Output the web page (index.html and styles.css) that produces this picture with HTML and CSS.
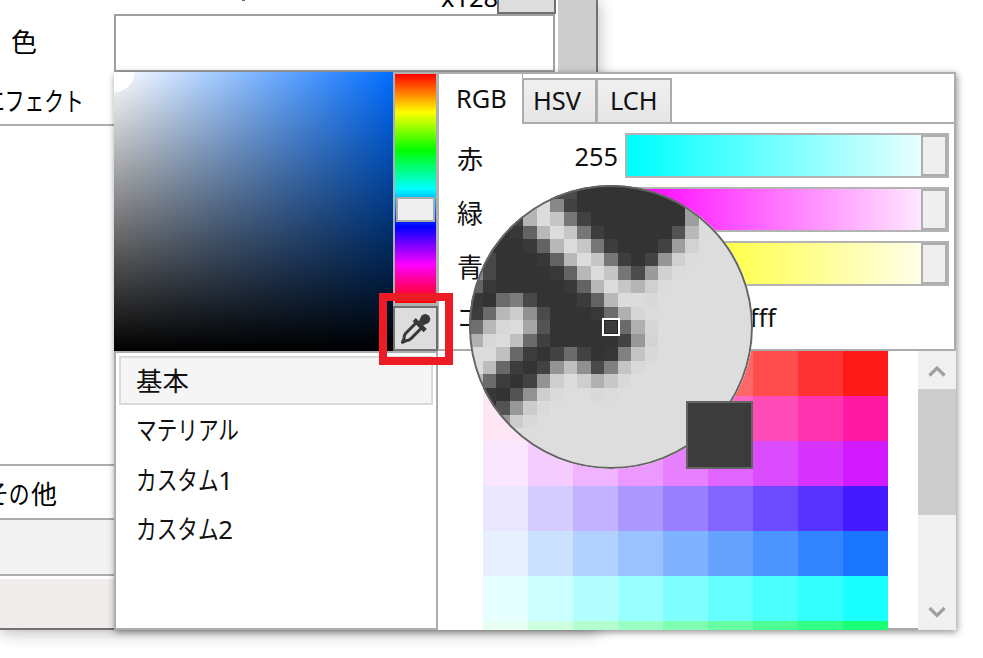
FILE: index.html
```html
<!DOCTYPE html>
<html lang="ja">
<head>
<meta charset="utf-8">
<title>カラーピッカー</title>
<link rel="stylesheet" href="styles.css">
</head>
<body>
<div class="desktop">
  <div class="window">
    <div class="props">
      <div class="top-row"><span class="speck"></span><span class="multiplier">x128</span><span class="top-button"></span></div>
      <div class="color-row"><span class="label">色</span><div class="color-box"></div></div>
      <div class="effect-row"><span class="kana">エフェクト</span></div>
      <div class="effect-list"></div>
      <div class="other-row"><span class="other"><span class="kana">その</span>他</span></div>
      <div class="other-panel"></div>
      <div class="status"></div>
    </div>
    <div class="window-scroll"></div>
  </div>

  <div class="picker">
    <div class="left">
      <div class="spectrum-row">
        <div class="spectrum"></div>
        <div class="hue-col">
          <div class="hue"><div class="hue-thumb"></div></div>
          <div class="dropper">
            <svg width="36" height="36" viewBox="0 0 36 36">
              <path d="M19 11 L8.5 21.5 Q7.2 23 7 26.5 L5.4 30.3 L9 28.8 Q12 28.6 14 26.6 L24.5 16" fill="none" stroke="#383838" stroke-width="3" stroke-linejoin="round"/>
              <path d="M15.6 9.2 L18.8 6 L29.8 17 L26.6 20.2 Z" fill="#383838"/>
              <path d="M21.8 9.4 L24.4 3.8 Q28 .2 31.8 3.4 Q35 7.2 31.4 11 L26 13.6 Z" fill="#383838"/>
            </svg>
          </div>
        </div>
      </div>
      <div class="palette-list">
        <div class="item selected">基本</div>
        <div class="item"><span class="kana">マテリアル</span></div>
        <div class="item"><span class="kana custom">カスタム</span><span>1</span></div>
        <div class="item"><span class="kana custom">カスタム</span><span>2</span></div>
      </div>
    </div>
    <div class="right">
      <div class="tabs"><div class="tab active">RGB</div><div class="tab">HSV</div><div class="tab">LCH</div><div class="tab-fill"></div></div>
      <div class="channels">
        <div class="channel"><span class="name">赤</span><span class="value">255</span><div class="bar red"><i></i></div></div>
        <div class="channel"><span class="name">緑</span><span class="value">255</span><div class="bar green"><i></i></div></div>
        <div class="channel"><span class="name">青</span><span class="value">255</span><div class="bar blue"><i></i></div></div>
        <div class="code"><span class="kana">コード</span><span class="hex">#ffffff</span></div>
      </div>
      <div class="swatch-area">
        <div class="swatches" id="swatches"></div>
        <div class="scroll">
          <svg width="38" height="38" viewBox="0 0 38 38"><path d="M11.5 24.5 L19 17 L26.5 24.5" fill="none" stroke="#a0a0a0" stroke-width="3.2"/></svg>
          <div class="scroll-thumb"></div>
          <svg width="38" height="38" viewBox="0 0 38 38"><path d="M11.5 16 L19 23.5 L26.5 16" fill="none" stroke="#a0a0a0" stroke-width="3.2"/></svg>
        </div>
      </div>
    </div>
  </div>

  <div class="highlight"></div>
  <div class="lens"><div class="pixels" id="pixels"></div></div>
  <div class="reticle"></div>
  <div class="sample"></div>
</div>
<script src="script.js"></script>
</body>
</html>
```
FILE: styles.css
```css
* { box-sizing: border-box; }
body { margin: 0; background: #fff; color: #111; font: 25.4px/32px "Noto Sans", "Noto Sans CJK JP", sans-serif; }
.desktop { position: relative; width: 983px; height: 658px; overflow: hidden; }
.kana { display: inline-block; transform: scaleX(.8); transform-origin: 0 50%; white-space: nowrap; }

.window { display: flex; width: 598px; height: 630px; border-right: 2px solid #717171; border-bottom: 2px solid #717171; box-shadow: 0 2px 16px rgba(0,0,0,.3); background: #fff; }
.props { width: 558px; display: flex; flex-direction: column; color: #000; }
.window-scroll { flex: 1; background: #cdcdcd; }
.top-row { height: 14px; display: flex; overflow: hidden; }
.speck { width: 3px; height: 1px; margin-left: 242px; background: #666; }
.multiplier { margin: -19px 0 0 196px; width: 56px; font-size: 25.4px; line-height: 32px; }
.top-button { width: 59px; height: 14px; background: #ddd; border: 2px solid #707070; border-top: 0; }
.color-row { height: 58px; display: flex; }
.label { width: 114px; padding: 12px 0 0 11px; font-size: 26px; }
.color-box { width: 441px; border: 2px solid #a0a0a0; }
.effect-row { height: 54px; padding-top: 13px; border-bottom: 2px solid #abadb3; }
.effect-row .kana { margin-left: -15px; font-size: 26px; transform: scaleX(.76); }
.effect-list { height: 340px; border-bottom: 2px solid #abadb3; }
.other-row { height: 54px; padding-top: 12px; border-bottom: 2px solid #a8acb0; }
.other { display: inline-block; margin-left: -12px; font-size: 26px; white-space: nowrap; }
.other .kana { margin-right: -9px; }
.other-panel { height: 56px; background: #f3f3f3; border-bottom: 2px solid #abadb3; }
.status { flex: 1; margin-top: 3px; background: #f0eceb; }

.picker { position: absolute; left: 114px; top: 72px; width: 842px; height: 558px; display: flex; background: #fff; box-shadow: 1px 2px 7px rgba(0,0,0,.45); }
.left { width: 325px; }
.spectrum-row { display: flex; height: 279px; }
.spectrum { width: 279px; background: radial-gradient(circle at 0 0, #fff 20px, transparent 20.8px), linear-gradient(to top, #000, transparent), linear-gradient(to right, #fff, #006dff); }
.hue-col { width: 46px; display: flex; flex-direction: column; background: #b0b0b0; }
.hue { flex: 1; margin: 2px 3px 3px 2px; padding-top: 123px; background: linear-gradient(#f00, #ff0 16.7%, #0f0 33.3%, #0ff 50%, #00f 66.7%, #f0f 83.3%, #f00); }
.hue-thumb { height: 25px; margin: 0 1px; background: #efefef; border: 2px solid #aaa; }
.dropper { height: 45px; width: 45px; border: 2px solid #707070; background: #ddd; }
.dropper svg { display: block; margin: 4px 0 0 2px; }
.palette-list { height: 279px; width: 324px; padding: 3px 3px; border: 2px solid #abadb3; background: #fff; }
.item { height: 49.6px; padding: 9px 16px; font-size: 25.8px; white-space: nowrap; }
.item.selected { height: 49px; border: 2px solid #dadada; background: #f5f5f5; padding: 7px 15px; font-size: 26.4px; }
.item .kana { margin-left: 1px; }
.item .custom { margin-right: -21px; }

.right { width: 517px; display: flex; flex-direction: column; }
.tabs { height: 52px; display: flex; align-items: flex-end; border-top: 2px solid #acacac; border-right: 2px solid #acacac; }
.tab { height: 46px; width: 74px; padding: 4px 0 0 9px; border: 2px solid #acacac; border-left-width: 1px; background: linear-gradient(#f0f0f0, #e5e5e5); }
.tab.active { height: 50px; width: 84px; padding: 8px 0 0 17px; border: 0; border-right: 1px solid #acacac; background: #fff; }
.tab + .tab + .tab { width: 75px; padding-left: 12px; }
.tab-fill { flex: 1; height: 2px; background: #acacac; }
.channels { height: 227px; padding-top: 10px; border-right: 2px solid #acacac; border-bottom: 2px solid #acacac; }
.channel { height: 54px; display: flex; }
.name { width: 80px; padding: 9px 0 0 18px; font-size: 26px; }
.value { width: 99px; padding: 6px 0 0; text-align: right; }
.bar { width: 324px; height: 45px; margin: -1px 0 0 7px; display: flex; justify-content: flex-end; border: 2px solid #b3b3b3; }
.bar i { width: 26px; height: 41px; border: 2px solid #adadad; background: #efefef; }
.red { background: linear-gradient(to right, #0ff 2%, #fff 101%); }
.green { background: linear-gradient(to right, #f0f 2%, #fff 101%); }
.blue { background: linear-gradient(to right, #ff0 2%, #fff 101%); }
.code { display: flex; padding: 5px 0 0 18px; }
.hex { margin-left: 155px; width: 90px; text-align: right; }
.code .kana { width: 74px; }
.swatch-area { height: 279px; display: flex; justify-content: space-between; overflow: hidden; background: linear-gradient(#aaa, #aaa) 449px 277px / 30px 2px no-repeat; }
.swatches { width: 405px; margin-left: 44px; display: grid; grid-template-columns: repeat(9, 45px); grid-auto-rows: 45px; height: 279px; overflow: hidden; }
.scroll { width: 38px; display: flex; flex-direction: column; justify-content: space-between; background: #f0f0f0; }
.scroll svg { display: block; }
.scroll-thumb { height: 126px; margin-bottom: 77px; background: #cdcdcd; }

.highlight { position: absolute; left: 379px; top: 293px; width: 74px; height: 72px; border: 8px solid #ed1c24; }
.lens { position: absolute; left: 469px; top: 185px; width: 284px; height: 284px; border-radius: 50%; overflow: hidden; background: #ddd; }
.lens::after { content: ""; position: absolute; inset: 0; border-radius: 50%; border: 2px solid #646464; }
.pixels { display: grid; grid-template-columns: repeat(21, 13.5px); grid-auto-rows: 13.5px; }
.reticle { position: absolute; left: 602px; top: 318px; width: 18px; height: 18px; border: 2px solid #fff; box-shadow: inset 0 0 0 1px #222; background: #3c3c3c; }
.sample { position: absolute; left: 686px; top: 401px; width: 67px; height: 68px; border: 2px solid #646464; background: #3c3c3c; }
```
FILE: script.js
```js
// Palette: one hue per row, lightness falling from 95% to 55%.
const hues = [0, 324, 288, 251, 216, 180, 144];
document.getElementById("swatches").innerHTML = hues.map(h =>
  Array.from({ length: 9 }, (_, i) => `<b style="background:hsl(${h} 100% ${95 - i * 5}%)"></b>`).join("")
).join("");

// Gray levels of the magnified pixels, one hex byte per cell.
const rows = [
  "33 33 33 33 33 33 4b 4b 33 33 33 33 33 33 33 33 9e dd",
  "33 33 33 33 b4 dc 88 42 33 33 33 33 33 33 33 33 9e dd",
  "33 33 33 42 b4 dc c6 76 42 33 33 33 33 33 33 33 9e dc",
  "33 33 33 38 63 b8 dc c6 76 3d 33 33 33 33 33 53 b8 dc",
  "33 33 33 33 38 63 b8 dc c6 76 3d 33 33 33 42 9e d2 dd",
  "48 48 33 33 33 38 63 b8 dc c6 76 3d 33 42 95 d0 dc dd",
  "88 48 33 33 33 33 38 63 b8 dc c6 76 4b 9b d0 dc dd dd",
  "63 38 33 33 33 33 33 38 63 b8 dc c6 b4 d0 dc dd dd dd",
  "38 33 6b 7c 48 33 33 33 3c 63 b8 dc dc d9 dd dd dd dd",
  "3c 6b b8 cc 90 4b 33 33 33 38 6b b0 d6 dc dd dd dd dd",
  "70 b8 d8 dc a6 53 33 33 33 33 3c 6b b0 d6 dd dd dd dd",
  "b0 d8 dc c0 6b 3f 33 33 33 33 33 42 98 d4 dd dd dd dd",
  "dc dc c0 68 3c 33 42 6b 42 33 36 80 c4 d9 dd dd dd dd",
  "dc bc 68 3c 33 42 94 c0 90 4a 80 c4 d9 dd dd dd dd dd",
  "bc 6b 3c 33 42 94 ce dc ce b0 c8 d9 dd dd dd dd dd dd",
  "6b 38 33 53 92 ce da dd dd d9 db dd dd dd dd dd dd dd",
  "33 33 53 98 cc da dd dd dd dd dd dd dd dd dd dd dd dd",
  "33 53 98 cc d9 dd dd dd dd dd dd dd dd dd dd dd dd dd"
];
document.getElementById("pixels").innerHTML = rows.map(r =>
  (r + " dd dd dd").split(" ").map(v => `<b style="background:#${v}${v}${v}"></b>`).join("")
).join("");
```
